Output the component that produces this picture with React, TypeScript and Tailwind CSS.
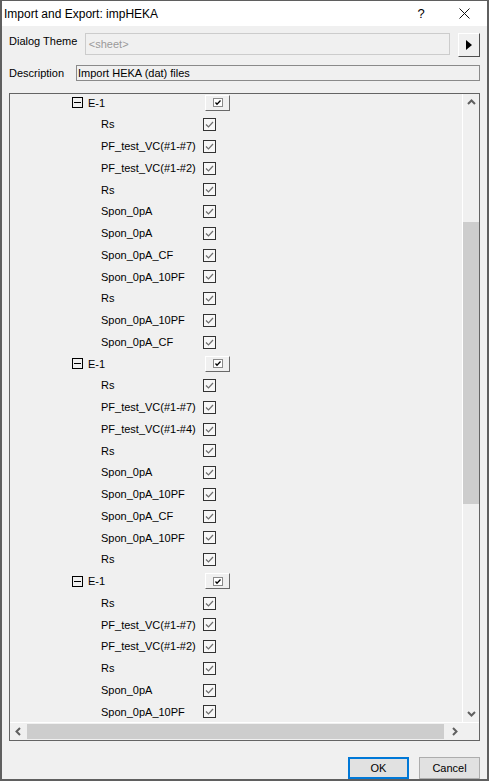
import React from "react";

const groups: string[][] = [
  [
    "Rs",
    "PF_test_VC(#1-#7)",
    "PF_test_VC(#1-#2)",
    "Rs",
    "Spon_0pA",
    "Spon_0pA",
    "Spon_0pA_CF",
    "Spon_0pA_10PF",
    "Rs",
    "Spon_0pA_10PF",
    "Spon_0pA_CF",
  ],
  [
    "Rs",
    "PF_test_VC(#1-#7)",
    "PF_test_VC(#1-#4)",
    "Rs",
    "Spon_0pA",
    "Spon_0pA_10PF",
    "Spon_0pA_CF",
    "Spon_0pA_10PF",
    "Rs",
  ],
  ["Rs", "PF_test_VC(#1-#7)", "PF_test_VC(#1-#2)", "Rs", "Spon_0pA", "Spon_0pA_10PF"],
];

const Check = () => (
  <svg width="13" height="13" viewBox="0 0 13 13" className="block">
    <rect x="0.5" y="0.5" width="12" height="12" fill="#f7f7f7" stroke="#333333" />
    <polyline points="3,6.5 5.5,9 10,4" fill="none" stroke="#6e6e6e" strokeWidth="1.2" />
  </svg>
);

const GroupButton = () => (
  <div className="ml-[2px] w-[25px] h-[16px] bg-[#f0f0f0] border-t border-l border-t-white border-l-white border-b border-r border-b-[#696969] border-r-[#696969] flex items-center justify-center">
    <svg width="10" height="9" viewBox="0 0 10 9" className="block">
      <rect x="0.5" y="0.5" width="9" height="8" fill="#ffffff" stroke="#8a8a8a" />
      <polyline points="2.5,4.5 4,6.2 7.5,2.5" fill="none" stroke="#000" strokeWidth="1.3" />
    </svg>
  </div>
);

const Chevron = ({ dir }: { dir: "up" | "down" | "left" | "right" }) => {
  const pts = {
    up: "1,6 4.5,2.5 8,6",
    down: "1,3 4.5,6.5 8,3",
    left: "6,1 2.5,4.5 6,8",
    right: "3,1 6.5,4.5 3,8",
  }[dir];
  return (
    <svg width="9" height="9" viewBox="0 0 9 9" className="block">
      <polyline points={pts} fill="none" stroke="#606060" strokeWidth="2" />
    </svg>
  );
};

export default function App() {
  return (
    <div
      className="w-[489px] h-[781px] bg-[#f0f0f0] border-x-2 border-b-2 border-t border-[#5f5f5f] flex flex-col text-[11px] text-black"
      style={{ fontFamily: '"Liberation Sans", Arial, sans-serif' }}
    >
      {/* title bar */}
      <div className="h-[25px] bg-white flex items-center text-[12px]">
        <div className="pl-[2px] flex-1">Import and Export: impHEKA</div>
        <div className="w-[40px] text-center text-[13px]">?</div>
        <div className="w-[46px] flex items-center justify-center">
          <svg width="11" height="11" viewBox="0 0 11 11">
            <path d="M0.5 0.5 L10.5 10.5 M10.5 0.5 L0.5 10.5" stroke="#111" strokeWidth="1" />
          </svg>
        </div>
      </div>

      {/* dialog theme */}
      <div className="mt-[7px] h-[24px] flex items-start pl-[7px] pr-[7px]">
        <div className="w-[76px] pt-[2px] leading-[13px]">Dialog Theme</div>
        <div className="w-[366px] h-[22px] border border-[#cccccc] bg-[#f0f0f0] flex items-center pl-[3px] text-[#9a9a9a]">
          &lt;sheet&gt;
        </div>
        <div className="ml-[8px] w-[22px] h-[24px] bg-[#f0f0f0] border-t border-l border-t-white border-l-white border-b border-r border-b-[#505050] border-r-[#505050] flex items-center justify-center">
          <svg width="6" height="10" viewBox="0 0 6 10">
            <polygon points="0,0 6,5 0,10" fill="#000" />
          </svg>
        </div>
      </div>

      {/* description */}
      <div className="mt-[8px] h-[16px] flex items-center pl-[7px] pr-[7px]">
        <div className="w-[67px]">Description</div>
        <div className="flex-1 h-[16px] border border-[#8a8a8a] bg-[#f0f0f0] flex items-center pl-[1px]">
          Import HEKA (dat) files
        </div>
      </div>

      {/* tree panel */}
      <div className="mt-[12px] ml-[7px] w-[471px] h-[648px] border border-[#646464] flex flex-col">
        <div className="flex-1 flex min-h-0">
          <div className="flex-1 overflow-hidden">
            <div className="-mt-[2px]">
              {groups.map((items, gi) => (
                <div key={gi}>
                  <div className="h-[21.75px] flex items-center">
                    <div className="w-[193px] flex items-center pl-[62px]">
                      <div className="w-[11px] h-[11px] border border-black flex items-center justify-center">
                        <div className="w-[7px] h-[1px] bg-black" />
                      </div>
                      <span className="ml-[5px]">E-1</span>
                    </div>
                    <GroupButton />
                  </div>
                  {items.map((name, i) => (
                    <div key={i} className="h-[21.75px] flex items-center">
                      <div className="w-[193px] pl-[91px] whitespace-nowrap">{name}</div>
                      <Check />
                    </div>
                  ))}
                </div>
              ))}
            </div>
          </div>
          {/* vertical scrollbar */}
          <div className="w-[17px] border-l border-white bg-[#f0f0f0] flex flex-col">
            <div className="h-[17px] flex items-center justify-center">
              <Chevron dir="up" />
            </div>
            <div className="flex-1">
              <div className="mt-[111px] h-[282px] bg-[#cdcdcd]" />
            </div>
            <div className="h-[17px] flex items-center justify-center">
              <Chevron dir="down" />
            </div>
          </div>
        </div>
        {/* horizontal scrollbar */}
        <div className="h-[18px] border-t border-white flex">
          <div className="w-[17px] flex items-center justify-center">
            <Chevron dir="left" />
          </div>
          <div className="flex-1 flex items-center pr-[2px]">
            <div className="w-full h-[15px] bg-[#cdcdcd]" />
          </div>
          <div className="w-[17px] flex items-center justify-center">
            <Chevron dir="right" />
          </div>
          <div className="w-[16px]" />
        </div>
      </div>

      {/* buttons */}
      <div className="mt-[16px] flex justify-end pr-[7px] gap-[10px]">
        <button className="w-[61px] h-[22px] bg-[#e1e1e1] border-2 border-[#0078d7] flex items-center justify-center">
          OK
        </button>
        <button className="w-[61px] h-[22px] bg-[#e1e1e1] border border-[#adadad] flex items-center justify-center">
          Cancel
        </button>
      </div>
    </div>
  );
}
